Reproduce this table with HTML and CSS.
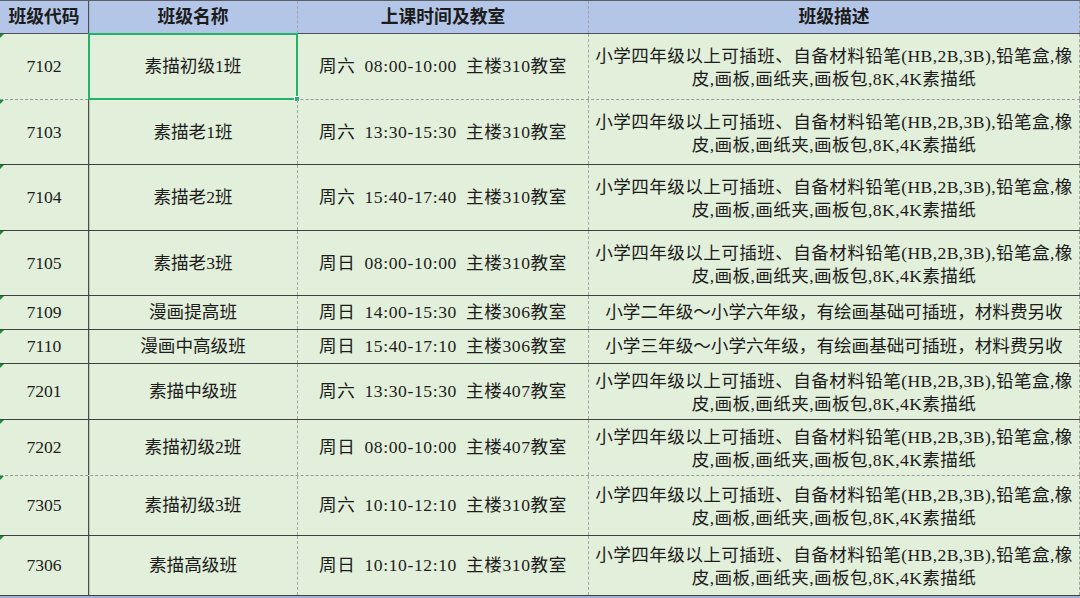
FILE: index.html
```html
<!DOCTYPE html>
<html lang="zh-CN">
<head>
<meta charset="utf-8">
<title>班级列表</title>
<link rel="stylesheet" href="styles.css">
</head>
<body>
<div class="sheet">
  <div class="row head">
    <div class="cell c1">班级代码</div>
    <div class="cell c2">班级名称</div>
    <div class="cell c3">上课时间及教室</div>
    <div class="cell c4">班级描述</div>
  </div>
  <div class="row h66 dashed">
    <div class="cell c1 code">7102</div>
    <div class="cell c2 selected">素描初级1班<span class="sel"><span class="handle"></span></span></div>
    <div class="cell c3 time">周六 08:00-10:00 主楼310教室</div>
    <div class="cell c4 mixed">小学四年级以上可插班、自备材料铅笔(HB,2B,3B),铅笔盒,橡<br>皮,画板,画纸夹,画板包,8K,4K素描纸</div>
  </div>
  <div class="row h65">
    <div class="cell c1 code">7103</div>
    <div class="cell c2">素描老1班</div>
    <div class="cell c3 time">周六 13:30-15:30 主楼310教室</div>
    <div class="cell c4 mixed">小学四年级以上可插班、自备材料铅笔(HB,2B,3B),铅笔盒,橡<br>皮,画板,画纸夹,画板包,8K,4K素描纸</div>
  </div>
  <div class="row h66">
    <div class="cell c1 code">7104</div>
    <div class="cell c2">素描老2班</div>
    <div class="cell c3 time">周六 15:40-17:40 主楼310教室</div>
    <div class="cell c4 mixed">小学四年级以上可插班、自备材料铅笔(HB,2B,3B),铅笔盒,橡<br>皮,画板,画纸夹,画板包,8K,4K素描纸</div>
  </div>
  <div class="row h65">
    <div class="cell c1 code">7105</div>
    <div class="cell c2">素描老3班</div>
    <div class="cell c3 time">周日 08:00-10:00 主楼310教室</div>
    <div class="cell c4 mixed">小学四年级以上可插班、自备材料铅笔(HB,2B,3B),铅笔盒,橡<br>皮,画板,画纸夹,画板包,8K,4K素描纸</div>
  </div>
  <div class="row h34">
    <div class="cell c1 code">7109</div>
    <div class="cell c2">漫画提高班</div>
    <div class="cell c3 time">周日 14:00-15:30 主楼306教室</div>
    <div class="cell c4">小学二年级～小学六年级，有绘画基础可插班，材料费另收</div>
  </div>
  <div class="row h34">
    <div class="cell c1 code">7110</div>
    <div class="cell c2">漫画中高级班</div>
    <div class="cell c3 time">周日 15:40-17:10 主楼306教室</div>
    <div class="cell c4">小学三年级～小学六年级，有绘画基础可插班，材料费另收</div>
  </div>
  <div class="row h56">
    <div class="cell c1 code">7201</div>
    <div class="cell c2">素描中级班</div>
    <div class="cell c3 time">周六 13:30-15:30 主楼407教室</div>
    <div class="cell c4 mixed">小学四年级以上可插班、自备材料铅笔(HB,2B,3B),铅笔盒,橡<br>皮,画板,画纸夹,画板包,8K,4K素描纸</div>
  </div>
  <div class="row h56 dashed">
    <div class="cell c1 code">7202</div>
    <div class="cell c2">素描初级2班</div>
    <div class="cell c3 time">周日 08:00-10:00 主楼407教室</div>
    <div class="cell c4 mixed">小学四年级以上可插班、自备材料铅笔(HB,2B,3B),铅笔盒,橡<br>皮,画板,画纸夹,画板包,8K,4K素描纸</div>
  </div>
  <div class="row h60">
    <div class="cell c1 code">7305</div>
    <div class="cell c2">素描初级3班</div>
    <div class="cell c3 time">周六 10:10-12:10 主楼310教室</div>
    <div class="cell c4 mixed">小学四年级以上可插班、自备材料铅笔(HB,2B,3B),铅笔盒,橡<br>皮,画板,画纸夹,画板包,8K,4K素描纸</div>
  </div>
  <div class="row h60">
    <div class="cell c1 code">7306</div>
    <div class="cell c2">素描高级班</div>
    <div class="cell c3 time">周日 10:10-12:10 主楼310教室</div>
    <div class="cell c4 mixed">小学四年级以上可插班、自备材料铅笔(HB,2B,3B),铅笔盒,橡<br>皮,画板,画纸夹,画板包,8K,4K素描纸</div>
  </div>
  <div class="row tail"></div>
</div>
</body>
</html>
```
FILE: styles.css
```css
* { box-sizing: border-box; }
html, body { margin: 0; padding: 0; }
body {
  width: 1080px;
  height: 598px;
  overflow: hidden;
  background: #e2efda;
  font-family: "Liberation Serif", "Noto Sans CJK SC", serif;
  font-size: 17.6px;
  color: #1c1c1c;
}
.sheet {
  display: flex;
  flex-direction: column;
  width: 1080px;
}
.row {
  display: grid;
  grid-template-columns: 89px 209px 291px 491px;
  background: #e2efda;
  border-bottom: 1px solid #3f423f;
}
.row.dashed { border-bottom: 1px dashed #9a9a9a; }
.head {
  height: 34px;
  background: #b4c6e7;
  border-top: 1px solid #5b5f66;
  border-bottom: 1px solid #4b4f57;
  font-weight: 700;
  font-size: 17.8px;
}
.h65 { height: 65px; }
.h66 { height: 66px; }
.h34 { height: 34px; }
.h56 { height: 56px; }
.h60 { height: 60px; }
.tail {
  height: 2px;
  background: #9fb3d8;
  border-bottom: none;
}
.cell {
  position: relative;
  display: flex;
  align-items: center;
  justify-content: center;
  text-align: center;
  line-height: 23px;
  white-space: nowrap;
  border-right: 1px dashed #a3a3a3;
}
.time {
  word-spacing: 4px;
  letter-spacing: 0.6px;
}
.mixed {
  letter-spacing: 0.4px;
  padding-top: 3px;
}
.c1 { border-right: 1px solid #4c514b; box-shadow: 1px 0 0 #b9c4b5; }
.head .c1 { box-shadow: 1px 0 0 #a4b3cf; }
.code::before {
  content: "";
  position: absolute;
  top: 0;
  left: 0;
  border-top: 4px solid #1c8a2e;
  border-right: 4px solid transparent;
}
.sel {
  position: absolute;
  top: -1px;
  left: -1px;
  right: -1px;
  bottom: -1px;
  border: 2px solid #21b36b;
  pointer-events: none;
}
.handle {
  position: absolute;
  right: -4px;
  bottom: -4px;
  width: 6px;
  height: 6px;
  background: #21b36b;
  border: 1px solid #ffffff;
}
```
